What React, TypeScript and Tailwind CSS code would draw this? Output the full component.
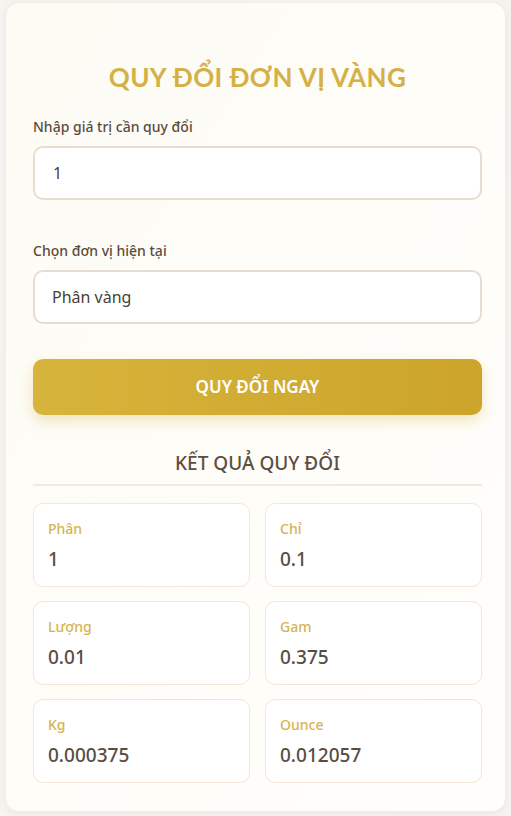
import { useState } from "react";

const UNITS: { key: string; label: string; perPhan: number }[] = [
  { key: "phan", label: "Phân", perPhan: 1 },
  { key: "chi", label: "Chỉ", perPhan: 0.1 },
  { key: "luong", label: "Lượng", perPhan: 0.01 },
  { key: "gam", label: "Gam", perPhan: 0.375 },
  { key: "kg", label: "Kg", perPhan: 0.000375 },
  { key: "ounce", label: "Ounce", perPhan: 0.012057 },
];

const fmt = (n: number) => String(parseFloat(n.toFixed(6)));

export default function App() {
  const [value, setValue] = useState("1");
  const [unit, setUnit] = useState("phan");
  const [result, setResult] = useState(1);

  const convert = () => {
    const from = UNITS.find(u => u.key === unit)!;
    setResult((parseFloat(value) || 0) / from.perPhan);
  };

  return (
    <div
      className="min-h-screen bg-[#f6f4f1] px-[5px] pt-[2px] pb-[5px]"
      style={{ fontFamily: '"Noto Sans", "Open Sans", sans-serif' }}
    >
      <div className="rounded-[14px] bg-gradient-to-br from-[#fdfbf4] to-[#fffefb] border border-[#f1ece4] shadow-[0_2px_8px_rgba(0,0,0,0.05)] pl-[27px] pr-[23px] pt-[56px] pb-[28px]">
        <h1
          className="text-center text-[26px] leading-[36px] font-bold tracking-[0.4px] text-[#d5b046] mb-[22px]"
          style={{ fontFamily: 'Lato, "Open Sans", sans-serif' }}
        >
          QUY ĐỔI ĐƠN VỊ VÀNG
        </h1>

        <label className="block text-[14px] leading-[20px] font-medium text-[#5c4b3d] mb-[9px]">
          Nhập giá trị cần quy đổi
        </label>
        <input
          value={value}
          onChange={e => setValue(e.target.value)}
          className="block w-full h-[54px] rounded-[10px] border-2 border-[#e6ddd0] bg-white px-[18px] text-[16px] text-[#4a3f36] outline-none"
        />

        <label className="block mt-[41px] text-[14px] leading-[20px] font-medium text-[#5c4b3d] mb-[9px]">
          Chọn đơn vị hiện tại
        </label>
        <select
          value={unit}
          onChange={e => setUnit(e.target.value)}
          className="block w-full h-[54px] rounded-[10px] border-2 border-[#e6ddd0] bg-white px-[17px] text-[16px] text-[#4a3f36] outline-none appearance-none"
        >
          {UNITS.map(u => (
            <option key={u.key} value={u.key}>
              {u.label} vàng
            </option>
          ))}
        </select>

        <button
          onClick={convert}
          className="mt-[35px] w-full h-[56px] rounded-[10px] bg-gradient-to-r from-[#d7b43b] to-[#cca42b] text-white text-[17px] font-semibold shadow-[0_6px_14px_rgba(212,175,55,0.3)]"
        >
          QUY ĐỔI NGAY
        </button>

        <h2 className="mt-[34px] text-center text-[19px] leading-[28px] font-medium text-[#5d4e42] pb-[7px] border-b-2 border-[#f1e8e2]">
          KẾT QUẢ QUY ĐỔI
        </h2>

        <div className="mt-[17px] grid grid-cols-2 gap-x-[15px] gap-y-[14px]">
          {UNITS.map(u => (
            <div
              key={u.key}
              className="h-[84px] rounded-[10px] border border-[#f3e8d8] bg-white px-[14px] pt-[15px]"
            >
              <div className="text-[14px] leading-[20px] font-medium text-[#d6b450]">{u.label}</div>
              <div className="mt-[7px] text-[19px] leading-[26px] font-medium text-[#5a4c41]">
                {fmt(result * u.perPhan)}
              </div>
            </div>
          ))}
        </div>
      </div>
    </div>
  );
}
